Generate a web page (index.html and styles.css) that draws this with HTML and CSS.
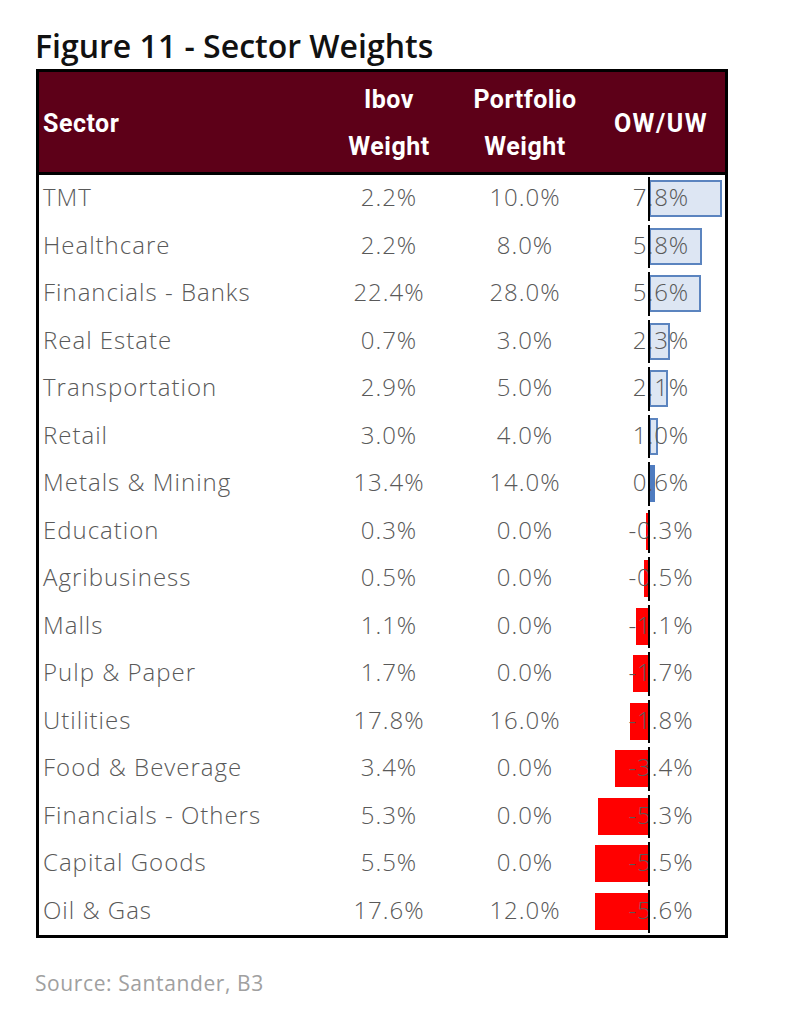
FILE: index.html
```html
<!DOCTYPE html>
<html lang="en">
<head>
<meta charset="utf-8">
<title>Figure 11 - Sector Weights</title>
<link rel="stylesheet" href="styles.css">
</head>
<body>
<div class="page">
  <h1 class="title">Figure 11 - Sector Weights</h1>
  <div class="table">
    <div class="head">
      <div class="hcell hleft">Sector</div>
      <div class="hcell">Ibov<br>Weight</div>
      <div class="hcell">Portfolio<br>Weight</div>
      <div class="hcell how">OW/UW</div>
    </div>
    <div class="body">
      <div class="row"><div class="c name">TMT</div><div class="c num">2.2%</div><div class="c num">10.0%</div><div class="c ow"><span class="bar pos" style="width:73px"></span><span class="val">7.8%</span><span class="axis"></span></div></div>
      <div class="row"><div class="c name">Healthcare</div><div class="c num">2.2%</div><div class="c num">8.0%</div><div class="c ow"><span class="bar pos" style="width:53px"></span><span class="val">5.8%</span><span class="axis"></span></div></div>
      <div class="row"><div class="c name">Financials - Banks</div><div class="c num">22.4%</div><div class="c num">28.0%</div><div class="c ow"><span class="bar pos" style="width:52px"></span><span class="val">5.6%</span><span class="axis"></span></div></div>
      <div class="row"><div class="c name">Real Estate</div><div class="c num">0.7%</div><div class="c num">3.0%</div><div class="c ow"><span class="bar pos" style="width:21px"></span><span class="val">2.3%</span><span class="axis"></span></div></div>
      <div class="row"><div class="c name">Transportation</div><div class="c num">2.9%</div><div class="c num">5.0%</div><div class="c ow"><span class="bar pos" style="width:19px"></span><span class="val">2.1%</span><span class="axis"></span></div></div>
      <div class="row"><div class="c name">Retail</div><div class="c num">3.0%</div><div class="c num">4.0%</div><div class="c ow"><span class="bar pos" style="width:9px"></span><span class="val">1.0%</span><span class="axis"></span></div></div>
      <div class="row"><div class="c name">Metals &amp; Mining</div><div class="c num">13.4%</div><div class="c num">14.0%</div><div class="c ow"><span class="bar pos thin" style="width:6px"></span><span class="val">0.6%</span><span class="axis"></span></div></div>
      <div class="row"><div class="c name">Education</div><div class="c num">0.3%</div><div class="c num">0.0%</div><div class="c ow"><span class="bar neg" style="width:3px"></span><span class="val">-0.3%</span><span class="axis"></span></div></div>
      <div class="row"><div class="c name">Agribusiness</div><div class="c num">0.5%</div><div class="c num">0.0%</div><div class="c ow"><span class="bar neg" style="width:5px"></span><span class="val">-0.5%</span><span class="axis"></span></div></div>
      <div class="row"><div class="c name">Malls</div><div class="c num">1.1%</div><div class="c num">0.0%</div><div class="c ow"><span class="bar neg" style="width:13px"></span><span class="val">-1.1%</span><span class="axis"></span></div></div>
      <div class="row"><div class="c name">Pulp &amp; Paper</div><div class="c num">1.7%</div><div class="c num">0.0%</div><div class="c ow"><span class="bar neg" style="width:16px"></span><span class="val">-1.7%</span><span class="axis"></span></div></div>
      <div class="row"><div class="c name">Utilities</div><div class="c num">17.8%</div><div class="c num">16.0%</div><div class="c ow"><span class="bar neg" style="width:19px"></span><span class="val">-1.8%</span><span class="axis"></span></div></div>
      <div class="row"><div class="c name">Food &amp; Beverage</div><div class="c num">3.4%</div><div class="c num">0.0%</div><div class="c ow"><span class="bar neg" style="width:34px"></span><span class="val">-3.4%</span><span class="axis"></span></div></div>
      <div class="row"><div class="c name">Financials - Others</div><div class="c num">5.3%</div><div class="c num">0.0%</div><div class="c ow"><span class="bar neg" style="width:51px"></span><span class="val">-5.3%</span><span class="axis"></span></div></div>
      <div class="row"><div class="c name">Capital Goods</div><div class="c num">5.5%</div><div class="c num">0.0%</div><div class="c ow"><span class="bar neg" style="width:54px"></span><span class="val">-5.5%</span><span class="axis"></span></div></div>
      <div class="row"><div class="c name">Oil &amp; Gas</div><div class="c num">17.6%</div><div class="c num">12.0%</div><div class="c ow"><span class="bar neg" style="width:54px"></span><span class="val">-5.6%</span><span class="axis"></span></div></div>
    </div>
  </div>
  <p class="source">Source: Santander, B3</p>
</div>
</body>
</html>
```

FILE: styles.css
```css
html, body {
  margin: 0;
  padding: 0;
  background: #ffffff;
}

.page {
  padding: 25px 0 0 35px;
  font-family: "Open Sans", "Noto Sans", sans-serif;
}

.title {
  margin: 0;
  font-family: "Open Sans", "Noto Sans", sans-serif;
  font-weight: 600;
  font-size: 32px;
  line-height: 42px;
  color: #111111;
  letter-spacing: 0;
}

.table {
  margin: 2px 0 0 1px;
  width: 686px;
  border: 3px solid #000000;
}

.head {
  display: grid;
  grid-template-columns: 282px 136px 136px 132px;
  height: 100px;
  background: #5d0018;
  border-bottom: 3px solid #000000;
  color: #ffffff;
  font-family: "Roboto", "Liberation Sans", sans-serif;
  font-weight: 700;
  font-size: 25px;
  letter-spacing: 0.5px;
  line-height: 47px;
}

.hcell {
  display: flex;
  align-items: center;
  justify-content: center;
  text-align: center;
  padding-top: 2px;
}

.hleft {
  justify-content: flex-start;
  padding-left: 4px;
}

.how {
  padding-left: 4px;
  letter-spacing: 1.5px;
}

.row {
  display: grid;
  grid-template-columns: 282px 136px 136px 132px;
  height: 47.5px;
  color: #595959;
  font-family: "Open Sans", "Noto Sans", sans-serif;
  font-weight: 300;
  font-size: 24px;
  letter-spacing: 1px;
}

.c {
  display: flex;
  align-items: center;
  padding-bottom: 4px;
  box-sizing: border-box;
}

.name {
  padding-left: 4px;
  white-space: nowrap;
}

.num {
  justify-content: center;
}

.ow {
  position: relative;
  justify-content: center;
  padding-left: 4px;
}

.val {
  position: relative;
  z-index: 1;
}

.bar {
  position: absolute;
  top: 50%;
  height: 37px;
  margin-top: -18.5px;
  box-sizing: border-box;
  z-index: 0;
}

.bar.pos {
  left: 56px;
  background: #dde6f3;
  border: 2px solid #5b84bf;
}

.bar.thin {
  background: #4f7cc0;
  border: none;
}

.bar.neg {
  right: 76px;
  background: #ff0000;
}

.axis {
  position: absolute;
  left: 55px;
  top: 2px;
  bottom: 2px;
  width: 2px;
  background: #000000;
  z-index: 2;
}

.source {
  margin: 31px 0 0 0;
  font-family: "Open Sans", "Noto Sans", sans-serif;
  font-size: 21px;
  letter-spacing: 0.6px;
  color: #a0a0a0;
}
```
